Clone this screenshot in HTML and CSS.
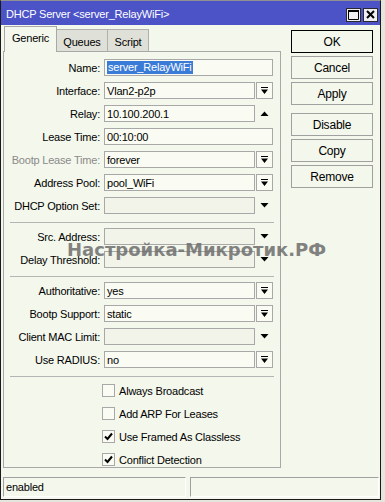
FILE: index.html
```html
<!DOCTYPE html>
<html>
<head>
<meta charset="utf-8">
<link rel="stylesheet" href="styles.css">
</head>
<body>
<div class="window">
  <div class="titlebar">
    <span class="title">DHCP Server &lt;server_RelayWiFi&gt;</span>
    <div class="tb-btns">
      <span class="tb-btn"><svg width="11" height="10" viewBox="0 0 11 10"><path d="M0.5 0.5h10v9h-10z" fill="none" stroke="#000"/><rect x="0" y="0" width="11" height="2" fill="#000"/></svg></span>
      <span class="tb-btn"><svg width="9" height="9" viewBox="0 0 9 9"><path d="M1 1L8 8M8 1L1 8" stroke="#000" stroke-width="2"/></svg></span>
    </div>
  </div>
  <div class="body">
    <div class="left">
      <div class="tabs">
        <div class="tab active">Generic</div>
        <div class="tab t-queues">Queues</div>
        <div class="tab t-script">Script</div>
      </div>
      <div class="panel">
        <div class="section">
          <div class="row"><span class="lbl">Name:</span><div class="ctl"><div class="field"><span class="sel">server_RelayWiFi</span></div></div></div>
          <div class="row"><span class="lbl">Interface:</span><div class="ctl"><div class="field">Vlan2-p2p</div><span class="dd"><svg width="9" height="8" viewBox="0 0 9 8"><path d="M1 0h7v1H1z M1 2.5h7L4.5 7z" fill="#000"/></svg></span></div></div>
          <div class="row"><span class="lbl">Relay:</span><div class="ctl"><div class="field">10.100.200.1</div><span class="tri"><svg width="9" height="5" viewBox="0 0 9 5"><path d="M0.5 5h8L4.5 0.5z" fill="#000"/></svg></span></div></div>
          <div class="row"><span class="lbl">Lease Time:</span><div class="ctl"><div class="field">00:10:00</div></div></div>
          <div class="row"><span class="lbl dim">Bootp Lease Time:</span><div class="ctl"><div class="field">forever</div><span class="dd"><svg width="9" height="8" viewBox="0 0 9 8"><path d="M1 0h7v1H1z M1 2.5h7L4.5 7z" fill="#000"/></svg></span></div></div>
          <div class="row"><span class="lbl">Address Pool:</span><div class="ctl"><div class="field">pool_WiFi</div><span class="dd"><svg width="9" height="8" viewBox="0 0 9 8"><path d="M1 0h7v1H1z M1 2.5h7L4.5 7z" fill="#000"/></svg></span></div></div>
          <div class="row"><span class="lbl">DHCP Option Set:</span><div class="ctl"><div class="field empty"></div><span class="tri"><svg width="9" height="5" viewBox="0 0 9 5"><path d="M0.5 0h8L4.5 4.5z" fill="#000"/></svg></span></div></div>
        </div>
        <div class="sep"></div>
        <div class="section">
          <div class="row"><span class="lbl">Src. Address:</span><div class="ctl"><div class="field empty"></div><span class="tri"><svg width="9" height="5" viewBox="0 0 9 5"><path d="M0.5 0h8L4.5 4.5z" fill="#000"/></svg></span></div></div>
          <div class="row"><span class="lbl">Delay Threshold:</span><div class="ctl"><div class="field empty"></div><span class="tri"><svg width="9" height="5" viewBox="0 0 9 5"><path d="M0.5 0h8L4.5 4.5z" fill="#000"/></svg></span></div></div>
        </div>
        <div class="sep"></div>
        <div class="section">
          <div class="row"><span class="lbl">Authoritative:</span><div class="ctl"><div class="field">yes</div><span class="dd"><svg width="9" height="8" viewBox="0 0 9 8"><path d="M1 0h7v1H1z M1 2.5h7L4.5 7z" fill="#000"/></svg></span></div></div>
          <div class="row"><span class="lbl">Bootp Support:</span><div class="ctl"><div class="field">static</div><span class="dd"><svg width="9" height="8" viewBox="0 0 9 8"><path d="M1 0h7v1H1z M1 2.5h7L4.5 7z" fill="#000"/></svg></span></div></div>
          <div class="row"><span class="lbl">Client MAC Limit:</span><div class="ctl"><div class="field empty"></div><span class="tri"><svg width="9" height="5" viewBox="0 0 9 5"><path d="M0.5 0h8L4.5 4.5z" fill="#000"/></svg></span></div></div>
          <div class="row"><span class="lbl">Use RADIUS:</span><div class="ctl"><div class="field">no</div><span class="dd"><svg width="9" height="8" viewBox="0 0 9 8"><path d="M1 0h7v1H1z M1 2.5h7L4.5 7z" fill="#000"/></svg></span></div></div>
        </div>
        <div class="sep"></div>
        <div class="checks">
          <div class="chk"><span class="box"></span><span>Always Broadcast</span></div>
          <div class="chk"><span class="box"></span><span>Add ARP For Leases</span></div>
          <div class="chk"><span class="box"><svg width="9" height="9" viewBox="0 0 9 9"><path d="M1 4.5L3.5 7L8 1.5" fill="none" stroke="#000" stroke-width="2"/></svg></span><span>Use Framed As Classless</span></div>
          <div class="chk"><span class="box"><svg width="9" height="9" viewBox="0 0 9 9"><path d="M1 4.5L3.5 7L8 1.5" fill="none" stroke="#000" stroke-width="2"/></svg></span><span>Conflict Detection</span></div>
        </div>
      </div>
    </div>
    <div class="buttons">
      <div class="btn default">OK</div>
      <div class="btn">Cancel</div>
      <div class="btn">Apply</div>
      <div class="btn gap">Disable</div>
      <div class="btn">Copy</div>
      <div class="btn">Remove</div>
    </div>
  </div>
  <div class="status">
    <div class="cell c1">enabled</div>
    <div class="cell c2"></div>
  </div>
  <div class="watermark">Настройка-Микротик.РФ</div>
</div>
</body>
</html>
```
FILE: styles.css
```css
* { box-sizing: border-box; }
html, body { margin: 0; padding: 0; }
body {
  background: #e4e6de;
  font-family: "Liberation Sans", Arial, sans-serif;
  font-size: 11px;
  letter-spacing: -0.2px;
  color: #000;
  width: 385px;
  height: 502px;
  overflow: hidden;
}
.window {
  position: relative;
  width: 381px;
  height: 500px;
  background: #f4f7ec;
  border: 1px solid #1a1a1a;
  border-top-color: #909090;
  display: flex;
  flex-direction: column;
}
.titlebar {
  height: 24px;
  background: #4b53c6;
  display: flex;
  align-items: center;
  justify-content: space-between;
  padding: 0 2px 0 5px;
}
.title {
  color: #fff;
  font-size: 11px;
  margin-top: 1px;
}
.tb-btns { display: flex; gap: 2px; margin-top: 3px; }
.tb-btn {
  width: 15px;
  height: 14px;
  background: #f0eef4;
  border: 1px solid #2a2a2a;
  display: flex;
  align-items: center;
  justify-content: center;
}
.body {
  display: flex;
  flex: none;
}
.left { margin-left: 2px; margin-top: 1px; }
.tabs {
  height: 25px;
  display: flex;
  align-items: flex-end;
  padding-left: 1px;
}
.tab {
  height: 22px;
  background: #dfe0d8;
  border: 1px solid #b0b0b0;
  border-bottom: none;
  display: flex;
  align-items: center;
  justify-content: center;
  padding-top: 2px;
  font-size: 11px;
}
.tab.active {
  width: 53px;
  height: 26px;
  margin-bottom: -1px;
  background: #f4f7ec;
  position: relative;
  z-index: 1;
  padding-top: 0;
  padding-bottom: 3px;
  border-color: #a8a8a8;
}
.t-queues { width: 51px; border-left: none; }
.t-script { width: 41px; border-left: none; }
.panel {
  width: 278px;
  height: 417px;
  border: 1px solid #a8a8a8;
  padding-top: 7px;
}
.section { display: flex; flex-direction: column; gap: 6px; }
.row { display: flex; height: 17px; align-items: center; }
.lbl {
  width: 96px;
  margin-right: 4px;
  text-align: right;
  white-space: nowrap;
}
.lbl.dim { color: #8a8a8a; }
.ctl {
  width: 169px;
  height: 17px;
  display: flex;
}
.field {
  flex: 1;
  height: 17px;
  border: 1px solid #a8a8a8;
  background: #fafbf2;
  padding-left: 2px;
  display: flex;
  align-items: center;
  white-space: nowrap;
}
.field.empty { background: #f2f4ea; }
.sel {
  background: #3a7bd8;
  color: #fff;
  padding: 0 1px;
  line-height: 13px;
}
.dd {
  width: 17px;
  height: 17px;
  margin-left: 1px;
  border: 1px solid #a8a8a8;
  background: #fafbf2;
  display: flex;
  align-items: center;
  justify-content: center;
}
.tri {
  width: 17px;
  margin-left: 1px;
  display: flex;
  align-items: center;
  justify-content: center;
}
.sep {
  height: 1px;
  background: #b4b4b4;
  margin: 8px 6px 5px 6px;
}
.checks {
  padding-top: 2px;
  display: flex;
  flex-direction: column;
  gap: 10px;
}
.chk {
  display: flex;
  align-items: center;
  height: 13px;
  padding-left: 98px;
}
.box {
  width: 13px;
  height: 13px;
  border: 1px solid #a8a8a8;
  background: #fafbf2;
  margin-right: 4px;
  display: flex;
  align-items: center;
  justify-content: center;
}
.buttons {
  margin-left: 10px;
  margin-top: 5px;
  display: flex;
  flex-direction: column;
  gap: 3px;
}
.btn {
  width: 82px;
  height: 23px;
  border: 1px solid #a0a0a0;
  background: #f4f7ec;
  display: flex;
  align-items: center;
  justify-content: center;
  font-size: 12px;
}
.btn.default { border: 1px solid #000; }
.btn.gap { margin-top: 5px; }
.status {
  display: flex;
  margin-top: 9px;
  padding-left: 2px;
  gap: 4px;
}
.cell {
  height: 20px;
  border-top: 1px solid #a0a0a0;
  border-left: 1px solid #a0a0a0;
  border-bottom: 1px solid #ffffff;
  border-right: 1px solid #ffffff;
  display: flex;
  align-items: center;
  padding-left: 2px;
}
.c1 { width: 183px; }
.c2 { width: 189px; }
.watermark {
  position: absolute;
  left: 66px;
  top: 240px;
  font-family: "DejaVu Sans", sans-serif;
  font-weight: bold;
  font-size: 18px;
  line-height: 18px;
  letter-spacing: 0;
  color: #6e6e6e;
  opacity: 0.85;
  white-space: nowrap;
  pointer-events: none;
}
```
